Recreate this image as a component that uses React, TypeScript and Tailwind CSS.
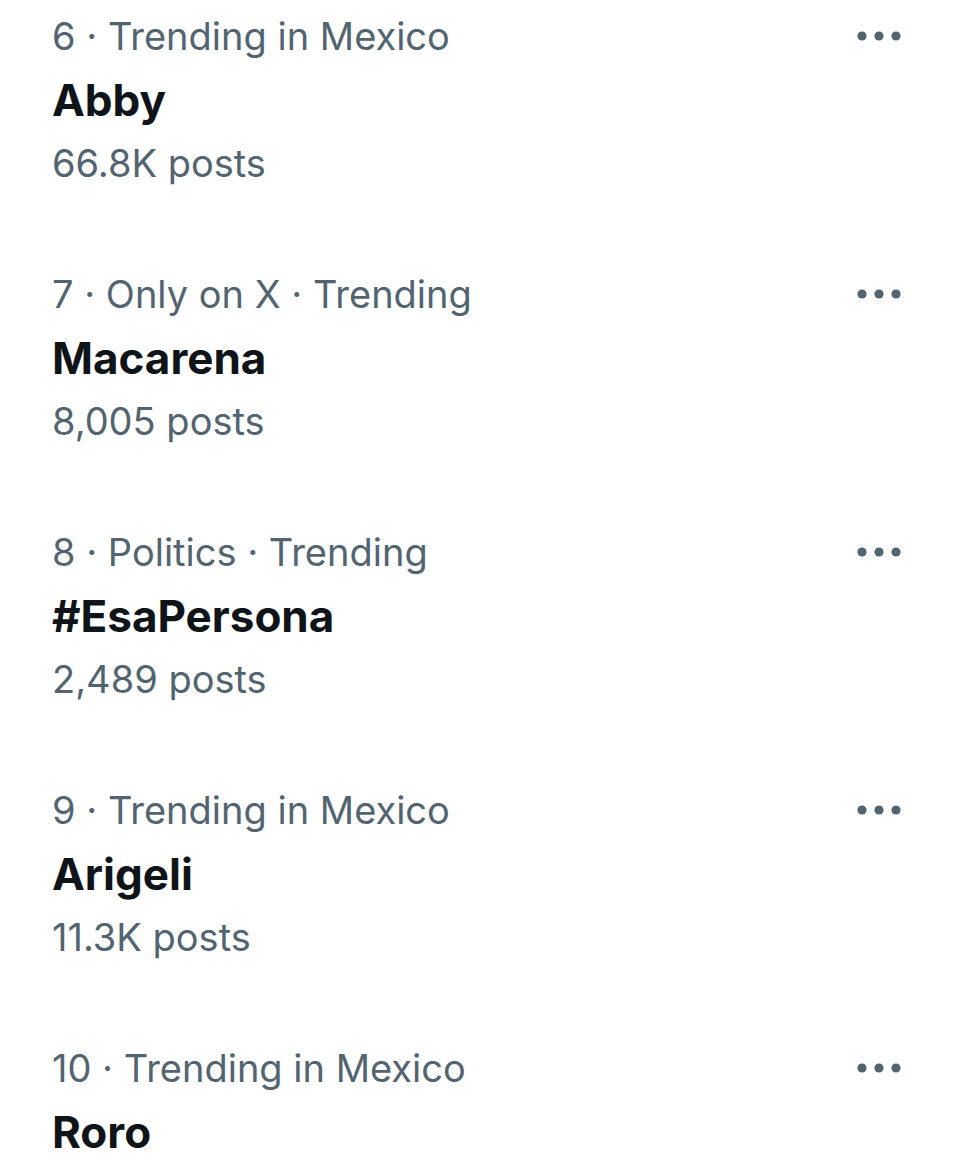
import React from "react";

const items = [
  { meta: "6 · Trending in Mexico", title: "Abby", posts: "66.8K posts" },
  { meta: "7 · Only on X · Trending", title: "Macarena", posts: "8,005 posts" },
  { meta: "8 · Politics · Trending", title: "#EsaPersona", posts: "2,489 posts" },
  { meta: "9 · Trending in Mexico", title: "Arigeli", posts: "11.3K posts" },
  { meta: "10 · Trending in Mexico", title: "Roro", posts: "" },
];

function Dots() {
  return (
    <svg width="46" height="12" viewBox="0 0 46 12" className="text-[#536471]">
      <circle cx="6" cy="6" r="4.6" fill="currentColor" />
      <circle cx="23" cy="6" r="4.6" fill="currentColor" />
      <circle cx="40" cy="6" r="4.6" fill="currentColor" />
    </svg>
  );
}

export default function App() {
  return (
    <div className="w-[960px] h-[1176px] bg-white overflow-hidden" style={{ fontFamily: "Inter, 'Noto Sans', sans-serif" }}>
      {items.map((it, i) => (
        <div key={i} className="flex pl-[52px] pr-[58px] pt-[4px] h-[258px]">
          <div className="flex-1 flex flex-col">
            <div className="text-[38px] leading-[64px] text-[#536471]">{it.meta}</div>
            <div className="text-[44px] leading-[64px] font-bold text-[#0f1419]">{it.title}</div>
            {it.posts && <div className="text-[38px] leading-[63px] text-[#536471]">{it.posts}</div>}
          </div>
          <div className="h-[64px] flex items-center">
            <Dots />
          </div>
        </div>
      ))}
    </div>
  );
}
